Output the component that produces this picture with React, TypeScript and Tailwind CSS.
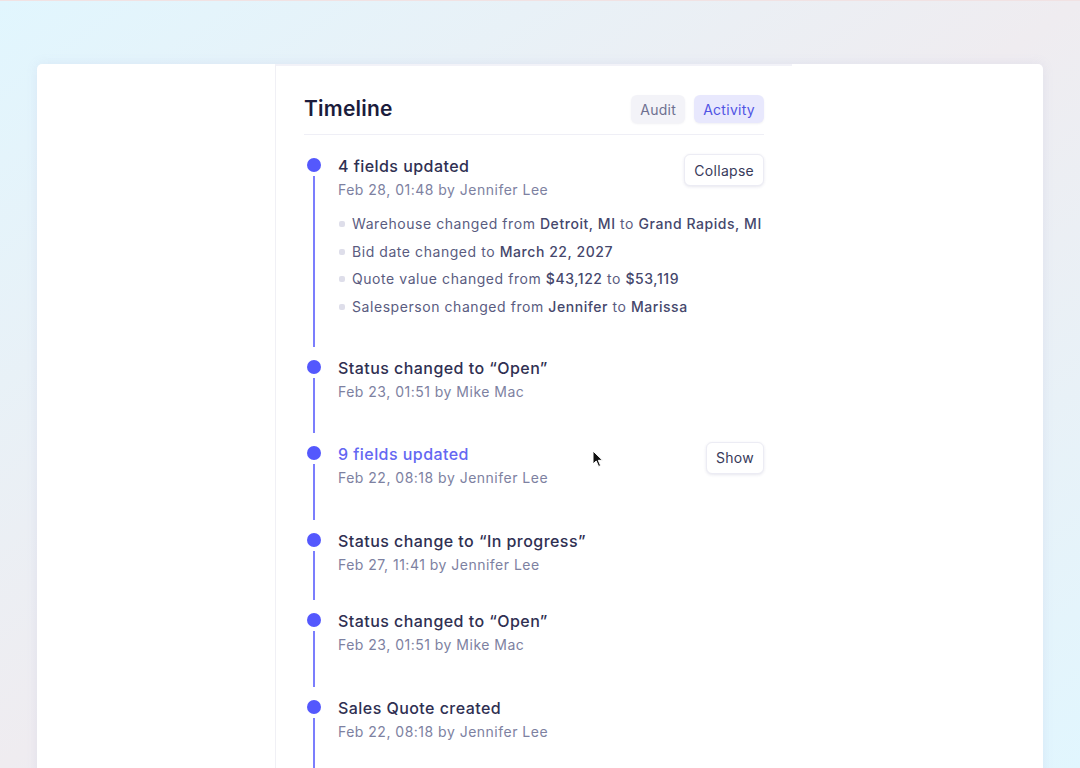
import React from 'react';

type Change = { parts: { text: string; strong?: boolean }[] };

type Item = {
  title: string;
  meta: string;
  highlight?: boolean;
  action?: string;
  changes?: Change[];
  gap: string;
};

const items: Item[] = [
  {
    title: '4 fields updated',
    meta: 'Feb 28, 01:48 by Jennifer Lee',
    action: 'Collapse',
    gap: 'pb-[39px]',
    changes: [
      {
        parts: [
          { text: 'Warehouse changed from ' },
          { text: 'Detroit, MI', strong: true },
          { text: ' to ' },
          { text: 'Grand Rapids, MI', strong: true },
        ],
      },
      { parts: [{ text: 'Bid date changed to ' }, { text: 'March 22, 2027', strong: true }] },
      {
        parts: [
          { text: 'Quote value changed from ' },
          { text: '$43,122', strong: true },
          { text: ' to ' },
          { text: '$53,119', strong: true },
        ],
      },
      {
        parts: [
          { text: 'Salesperson changed from ' },
          { text: 'Jennifer', strong: true },
          { text: ' to ' },
          { text: 'Marissa', strong: true },
        ],
      },
    ],
  },
  { title: 'Status changed to \u201cOpen\u201d', meta: 'Feb 23, 01:51 by Mike Mac', gap: 'pb-[39px]' },
  { title: '9 fields updated', meta: 'Feb 22, 08:18 by Jennifer Lee', highlight: true, action: 'Show', gap: 'pb-[40px]' },
  { title: 'Status change to \u201cIn progress\u201d', meta: 'Feb 27, 11:41 by Jennifer Lee', gap: 'pb-[33px]' },
  { title: 'Status changed to \u201cOpen\u201d', meta: 'Feb 23, 01:51 by Mike Mac', gap: 'pb-[40px]' },
  { title: 'Sales Quote created', meta: 'Feb 22, 08:18 by Jennifer Lee', gap: 'pb-[38px]' },
];

const TimelineItem: React.FC<{ item: Item }> = ({ item }) => (
  <div className="flex">
    {/* dot + line */}
    <div className="flex w-[16px] flex-col items-center pt-[4px]">
      <div className="h-[14px] w-[14px] shrink-0 rounded-full bg-[#5458fd]" />
      <div className="mt-[4px] mb-[9px] w-[2px] flex-1 bg-[#7b7efd]" />
    </div>
    <div className={`ml-[16px] flex-1 ${item.gap}`}>
      <div className="flex items-start justify-between">
        <div>
          <div
            className={`text-[16px] leading-[24px] font-medium tracking-[0.028em] ${
              item.highlight ? 'text-[#6467f2]' : 'text-[#2f3052]'
            }`}
          >
            {item.title}
          </div>
          <div className="mt-[1px] text-[14px] leading-[22px] tracking-[0.035em] text-[#7d81a1]">{item.meta}</div>
        </div>
        {item.action && (
          <button className="h-[32px] rounded-[6px] border border-[#ececf4] bg-white px-[9px] text-[14px] tracking-[0.02em] text-[#383a5a] shadow-[0_1px_3px_rgba(60,60,120,0.12)]">
            {item.action}
          </button>
        )}
      </div>
      {item.changes && (
        <ul className="mt-[13px] flex flex-col gap-[7.5px]">
          {item.changes.map((c, i) => (
            <li key={i} className="flex items-center text-[14px] leading-[20px] tracking-[0.04em] text-[#5a5c7f]">
              <span className="mr-[7px] ml-[1px] h-[6px] w-[6px] rounded-[2px] bg-[#dedeea]" />
              <span>
                {c.parts.map((p, j) =>
                  p.strong ? (
                    <span key={j} className="font-medium text-[#45476c]">
                      {p.text}
                    </span>
                  ) : (
                    <span key={j}>{p.text}</span>
                  )
                )}
              </span>
            </li>
          ))}
        </ul>
      )}
    </div>
  </div>
);

const App: React.FC = () => {
  return (
    <div
      className="relative h-[768px] w-full overflow-hidden border-t border-[#f1e2e3] bg-linear-to-br from-[#e1f6fe] via-[#efecf0] to-[#e1f6fe] pt-[63px]"
      style={{ fontFamily: 'Inter, "Noto Sans", sans-serif' }}
    >
      {/* card */}
      <div className="mx-[37px] h-[760px] rounded-[5px] bg-white shadow-[0_0_12px_rgba(140,140,200,0.12)]">
        <div className="ml-[238px] h-full w-[517px] border-t-2 border-l border-t-[#f2f2f8] border-l-[#f0f0f5] px-[28px] pt-[29px]">
          {/* header */}
          <div className="flex items-center justify-between border-b border-[#efeff6] pb-[11px]">
            <h1 className="text-[21px] leading-[28px] font-semibold tracking-[0.01em] text-[#1b1c3c]">Timeline</h1>
            <div className="flex gap-[9px]">
              <button className="h-[28px] rounded-[6px] bg-[#f3f3f8] px-[9px] text-[14px] tracking-[0.02em] text-[#6e7090] shadow-[0_1px_2px_rgba(60,60,120,0.08)]">
                Audit
              </button>
              <button className="h-[28px] rounded-[6px] bg-[#e8e8fd] px-[9px] text-[14px] tracking-[0.02em] text-[#5054e4] shadow-[0_1px_2px_rgba(60,60,120,0.08)]">
                Activity
              </button>
            </div>
          </div>

          {/* timeline */}
          <div className="mt-[19px] ml-[2px]">
            {items.map((item, i) => (
              <TimelineItem key={i} item={item} />
            ))}
          </div>
        </div>
      </div>

      {/* mouse pointer */}
      <svg className="absolute left-[592px] top-[449px]" width="12" height="18" viewBox="0 0 12 18">
        <path d="M1 1 L1 14 L4.2 11 L6.6 16.5 L8.6 15.6 L6.3 10.3 L10.5 10.3 Z" fill="#111" stroke="#fff" strokeWidth="1" />
      </svg>
    </div>
  );
};

export default App;
